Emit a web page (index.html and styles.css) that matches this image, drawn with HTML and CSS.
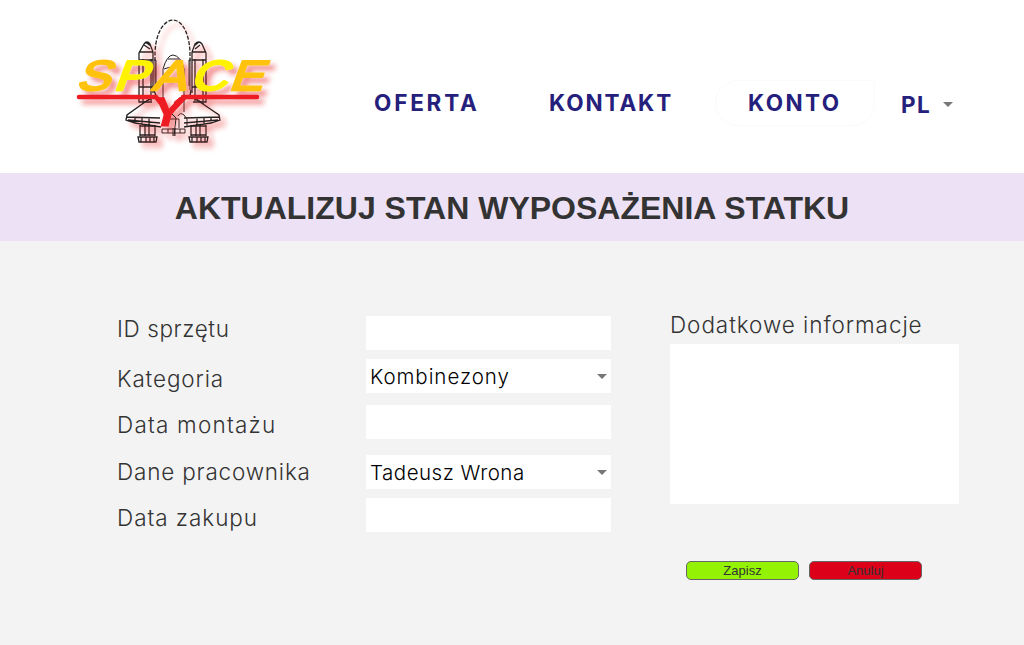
FILE: index.html
```html
<!DOCTYPE html>
<html lang="pl">
<head>
<meta charset="utf-8">
<title>Space Y</title>
<link rel="stylesheet" href="styles.css">
</head>
<body>
<header class="header">
  <svg class="logo" viewBox="60 10 230 150" role="img" aria-label="Space Y">
    <defs>
      <filter id="glow" x="-20%" y="-20%" width="150%" height="150%">
        <feDropShadow dx="5" dy="5" stdDeviation="2.6" flood-color="#e82020" flood-opacity=".5"/>
      </filter>
    </defs>
    <g filter="url(#glow)">
      <g class="ship">
        <path class="tank" d="M155 61V52C156 31 165 20 173 20S189 31 190 52V61"/>
        <path d="M155 59V90M190 59V90M156 60V86M189 60V86"/>
        <path class="booster" d="M139 87V53L144 44Q147 40 150 44L153 52V93M143 59V102M151 59V101M139 52H153M139 60H153M139 87H153M144 45L150 49M145 42L151 46M139 87V102H152"/>
        <path class="booster" d="M206 87V53L202 44Q199 40 195 44L192 52V93M203 59V102M195 59V101M192 52H206M192 60H206M192 87H206M200 45L195 49M199 42L194 46M206 87V102H193"/>
        <path d="M163 99V69Q167 55 173 55Q181 56 184 69V112M164 69Q173 65 182 69M168 59H179"/>
        <path class="wing" d="M154 90L156 96L145 102L127 115L126 120L135 123L161 127M191 90L190 96L200 102L219 115L220 120L211 123L184 127M127 117L160 118M219 117L184 118M128 120L160 123M218 120L184 123M135 117V123M142 117V124M149 117V125M211 117V123M204 117V124M197 117V125"/>
        <path d="M152 97L142 104M194 97L204 104"/>
        <path d="M165 124L171 113L176 118L174 136M178 116Q180 112 184 115L187 119V126M168 119H179V128M162 129H185V133H162ZM173 128V136M175 128V136M168 129V133M180 129V133"/>
        <path class="booster" d="M140 125V136M155 125V136M145 125V136M149 125V136M140 126H155M140 135H155M138 137H157L156 142H139ZM141 137V142M146 137V142M150 137V142M154 137V142"/>
        <path class="booster" d="M191 125V136M206 125V136M196 125V136M200 125V136M191 126H206M191 135H206M189 137H208L207 142H190ZM192 137V142M197 137V142M201 137V142M205 137V142"/>
      </g>
      <text class="brand" transform="translate(-1 90) skewX(-20) scale(1.2 1)"><tspan class="amber" x="64">S</tspan><tspan class="yellow" x="95">P</tspan><tspan class="amber" x="127">A</tspan><tspan class="yellow" x="159">C</tspan><tspan class="amber" x="191">E</tspan></text>
      <path class="rule" d="M79 97H156L160 102M183 97H257M184 97L176 103"/>
      <text class="brand-y" transform="translate(149 126) skewX(-14) scale(1.15 1)">Y</text>
    </g>
  </svg>
  <nav class="nav">
    <a class="nav-link oferta">OFERTA</a>
    <a class="nav-link kontakt">KONTAKT</a>
    <a class="nav-link konto">KONTO</a>
    <a class="lang"><span>PL</span><i class="caret"></i></a>
  </nav>
</header>
<h1 class="title"><span>AKTUALIZUJ STAN WYPOSAŻENIA STATKU</span></h1>
<main class="form">
  <div class="labels">
    <label class="l1">ID sprzętu</label>
    <label class="l2">Kategoria</label>
    <label class="l3">Data montażu</label>
    <label class="l4">Dane pracownika</label>
    <label class="l5">Data zakupu</label>
  </div>
  <div class="fields">
    <div class="field"></div>
    <div class="field select category"><span>Kombinezony</span><i class="caret"></i></div>
    <div class="field"></div>
    <div class="field select worker"><span>Tadeusz Wrona</span><i class="caret"></i></div>
    <div class="field"></div>
  </div>
  <div class="extra">
    <label class="l6">Dodatkowe informacje</label>
    <div class="notes"></div>
    <div class="actions">
      <button class="btn save">Zapisz</button>
      <button class="btn cancel">Anuluj</button>
    </div>
  </div>
</main>
</body>
</html>
```
FILE: styles.css
```css
* { box-sizing: border-box; }
body { margin: 0; background: #f3f3f3; color: #333; font-family: Inter, "Open Sans", sans-serif; }
.header { height: 173px; background: #fff; display: flex; padding: 10px 0 0 60px; }
.logo { width: 230px; height: 150px; flex: none; }
.ship { fill: none; stroke: #222; stroke-width: 1; }
.ship .tank { stroke-width: 1.3; stroke-dasharray: 4 1.5; }
.ship .wing, .ship .booster { stroke-width: 1.3; }
.brand { font: 400 42px "Liberation Sans", Arial, sans-serif; stroke-width: 2.4; stroke-linejoin: round; }
.amber { fill: #ffc20e; stroke: #ffc20e; }
.yellow { fill: #fff200; stroke: #fff200; }
.rule { stroke: #ed1c24; stroke-width: 4.5; stroke-linecap: round; fill: none; }
.brand-y { font: 700 41px "Liberation Sans", Arial, sans-serif; fill: #ed1c24; stroke: #ed1c24; stroke-width: 1; }
.nav { display: flex; align-items: center; height: 48px; margin: 69px 0 0 84px; color: #26207d; font-size: 22.5px; font-weight: 700; white-space: nowrap; }
.nav-link { line-height: 46px; height: 46px; }
.oferta { width: 175px; letter-spacing: 2.8px; }
.kontakt { width: 166px; letter-spacing: 1.9px; }
.konto { width: 160px; padding-left: 32px; line-height: 44px; letter-spacing: 2.4px; border: 1px solid #fafafa; border-radius: 23px 0 23px 23px; }
.lang { display: flex; align-items: center; margin: 2px 0 0 26px; gap: 12px; letter-spacing: 1.5px; }
.caret { width: 0; height: 0; border: 5px solid transparent; border-top-color: #777; border-bottom: 0; }
.title { margin: 0; height: 68px; background: #ede1f5; text-align: center; font: 700 32px/70px "Liberation Sans", Arial, sans-serif; white-space: nowrap; }
.form { display: flex; padding: 65px 0 0 117px; font-size: 22.5px; font-weight: 300; }
.labels { width: 249px; display: flex; flex-direction: column; line-height: 46px; white-space: nowrap; }
.l1 { margin-bottom: 4px; letter-spacing: .6px; }
.l2 { letter-spacing: .85px; }
.l3 { margin-bottom: 1px; letter-spacing: 1.2px; }
.l4 { letter-spacing: .8px; }
.l5 { letter-spacing: .95px; }
.fields { width: 245px; display: flex; flex-direction: column; padding-top: 10px; }
.field { height: 34px; background: #fff; color: #000; font-size: 20.5px; }
.field:nth-child(2) { margin-top: 9px; }
.field:nth-child(3) { margin-top: 12px; }
.field:nth-child(4) { margin-top: 16px; }
.field:nth-child(5) { margin-top: 9px; }
.select { display: flex; align-items: center; justify-content: space-between; padding: 0 4px; white-space: nowrap; }
.category { letter-spacing: .95px; }
.worker { letter-spacing: .5px; }
.extra { width: 289px; margin-left: 59px; display: flex; flex-direction: column; white-space: nowrap; }
.l6 { height: 38px; line-height: 37px; letter-spacing: .93px; }
.notes { height: 160px; background: #fff; }
.actions { display: flex; gap: 10px; padding: 57px 0 0 16px; }
.btn { width: 113px; height: 19px; padding: 0; border: 1px solid #666; border-radius: 5px; font: 13px/17px "Liberation Sans", Arial, sans-serif; color: #333; }
.save { background: #94f205; }
.cancel { background: #dc0019; }
```
